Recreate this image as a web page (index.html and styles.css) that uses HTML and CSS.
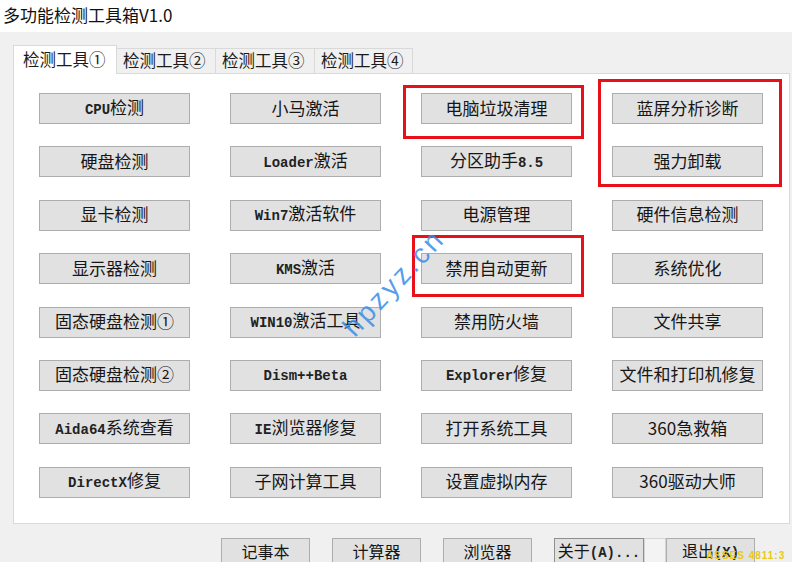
FILE: index.html
```html
<!DOCTYPE html>
<html lang="zh-CN">
<head>
  <meta charset="UTF-8" />
  <meta name="viewport" content="width=device-width, initial-scale=1" />
  <title>多功能检测工具箱V1.0</title>
  <link rel="stylesheet" href="styles.css">
</head>
<body>

  <div class="app">
    <div class="titlebar">多功能检测工具箱V1.0</div>

    <div class="window">
      <ul class="tabs">
        <li class="tab active">检测工具①</li>
        <li class="tab">检测工具②</li>
        <li class="tab">检测工具③</li>
        <li class="tab">检测工具④</li>
      </ul>

      <div class="panel">
        <div class="grid">
          <button class="btn"><span class="en">CPU</span>检测</button>
          <button class="btn">小马激活</button>
          <button class="btn">电脑垃圾清理</button>
          <button class="btn">蓝屏分析诊断</button>

          <button class="btn">硬盘检测</button>
          <button class="btn"><span class="en">Loader</span>激活</button>
          <button class="btn">分区助手<span class="en">8.5</span></button>
          <button class="btn">强力卸载</button>

          <button class="btn">显卡检测</button>
          <button class="btn"><span class="en">Win7</span>激活软件</button>
          <button class="btn">电源管理</button>
          <button class="btn">硬件信息检测</button>

          <button class="btn">显示器检测</button>
          <button class="btn"><span class="en">KMS</span>激活</button>
          <button class="btn">禁用自动更新</button>
          <button class="btn">系统优化</button>

          <button class="btn">固态硬盘检测①</button>
          <button class="btn"><span class="en">WIN10</span>激活工具</button>
          <button class="btn">禁用防火墙</button>
          <button class="btn">文件共享</button>

          <button class="btn">固态硬盘检测②</button>
          <button class="btn"><span class="en">Dism++Beta</span></button>
          <button class="btn"><span class="en">Explorer</span>修复</button>
          <button class="btn">文件和打印机修复</button>

          <button class="btn"><span class="en">Aida64</span>系统查看</button>
          <button class="btn"><span class="en">IE</span>浏览器修复</button>
          <button class="btn">打开系统工具</button>
          <button class="btn">360急救箱</button>

          <button class="btn"><span class="en">DirectX</span>修复</button>
          <button class="btn">子网计算工具</button>
          <button class="btn">设置虚拟内存</button>
          <button class="btn">360驱动大师</button>
        </div>
      </div>

      <div class="actions">
        <button class="btn small">记事本</button>
        <button class="btn small">计算器</button>
        <button class="btn small">浏览器</button>
        <button class="btn small focus">关于<span class="en">(A)...</span></button>
        <button class="btn small ghost"></button>
        <button class="btn small">退出<span class="en">(X)</span></button>
      </div>
    </div>

    <!-- annotations over the screenshot -->
    <div class="mark mark-1"></div>
    <div class="mark mark-2"></div>
    <div class="mark mark-3"></div>
    <div class="watermark">hpzyz.cn</div>
    <div class="stamp">ASSES 4811:3</div>
  </div>

</body>
</html>
```

FILE: styles.css
```css
html, body {
  margin: 0;
  padding: 0;
  width: 792px;
  height: 562px;
  overflow: hidden;
}

body {
  font-family: "Noto Sans CJK SC", "Noto Sans", sans-serif;
  color: #1b1b1b;
  background-color: #f0f0f0;
}

.app {
  position: relative;
  width: 792px;
  height: 562px;
}

.titlebar {
  height: 32px;
  line-height: 30px;
  padding-left: 3px;
  font-size: 17px;
  background-color: #fff;
  color: #111;
}

.window {
  padding-top: 13px;
}

.tabs {
  list-style: none;
  display: flex;
  align-items: flex-end;
  margin: 0 0 0 13px;
  padding: 0;
  height: 28px;
  position: relative;
  z-index: 1;
}

.tab {
  box-sizing: border-box;
  width: 100px;
  height: 25px;
  line-height: 23px;
  padding-left: 6px;
  font-size: 16.5px;
  border: 1px solid #d9d9d9;
  border-bottom: none;
  margin-left: -1px;
  background-color: #f0f0f0;
  white-space: nowrap;
}

.tab.active {
  width: 104px;
  height: 29px;
  line-height: 26px;
  padding-left: 9px;
  margin-left: 0;
  background-color: #fff;
  margin-bottom: -1px;
}

.tab:last-child {
  width: 99px;
}

.panel {
  box-sizing: border-box;
  width: 777px;
  height: 451px;
  margin-left: 13px;
  border: 1px solid #d9d9d9;
  background-color: #fff;
  padding: 19px 0 0 25px;
}

.grid {
  display: grid;
  grid-template-columns: repeat(4, 151px);
  grid-auto-rows: 31px;
  column-gap: 40px;
  row-gap: 22.4px;
}

.btn {
  box-sizing: border-box;
  height: 31px;
  padding: 0 0 3px;
  border: 1px solid #adadad;
  background-color: #e1e1e1;
  color: #161616;
  font-family: "Noto Sans CJK SC", "Noto Sans", sans-serif;
  font-size: 17px;
  line-height: 1;
  white-space: nowrap;
}

.en {
  font-family: "Liberation Mono", "Noto Sans CJK SC", monospace;
  font-size: 14px;
  font-weight: bold;
  color: #222;
}

.actions {
  display: flex;
  gap: 22px;
  margin: 14px 0 0 221px;
}

.btn.small {
  width: 89px;
  height: 30px;
  font-size: 16px;
  padding: 0 0 4px;
}

.btn.focus {
  width: 90px;
  border-color: #8f8f8f;
}

.btn.ghost {
  width: 22px;
  margin: 0 -22px;
  border-color: #d4d4d4;
  background-color: #f3f3f3;
}

.mark {
  position: absolute;
  box-sizing: border-box;
  border: 3px solid #e8111a;
}

.mark-1 {
  left: 403px;
  top: 85px;
  width: 181px;
  height: 54px;
}

.mark-2 {
  left: 598px;
  top: 79px;
  width: 184px;
  height: 108px;
}

.mark-3 {
  left: 412px;
  top: 235px;
  width: 172px;
  height: 62px;
}

.watermark {
  position: absolute;
  left: 394px;
  top: 283px;
  transform: translate(-50%, -50%) rotate(-47deg);
  font-family: "Liberation Sans", Arial, sans-serif;
  font-size: 28px;
  letter-spacing: 3px;
  color: rgba(58, 140, 230, 0.85);
  white-space: nowrap;
}

.stamp {
  position: absolute;
  left: 706px;
  top: 550px;
  font-family: "Liberation Sans", Arial, sans-serif;
  font-size: 10px;
  font-weight: bold;
  letter-spacing: 1px;
  color: #e8c818;
  white-space: nowrap;
}
```
